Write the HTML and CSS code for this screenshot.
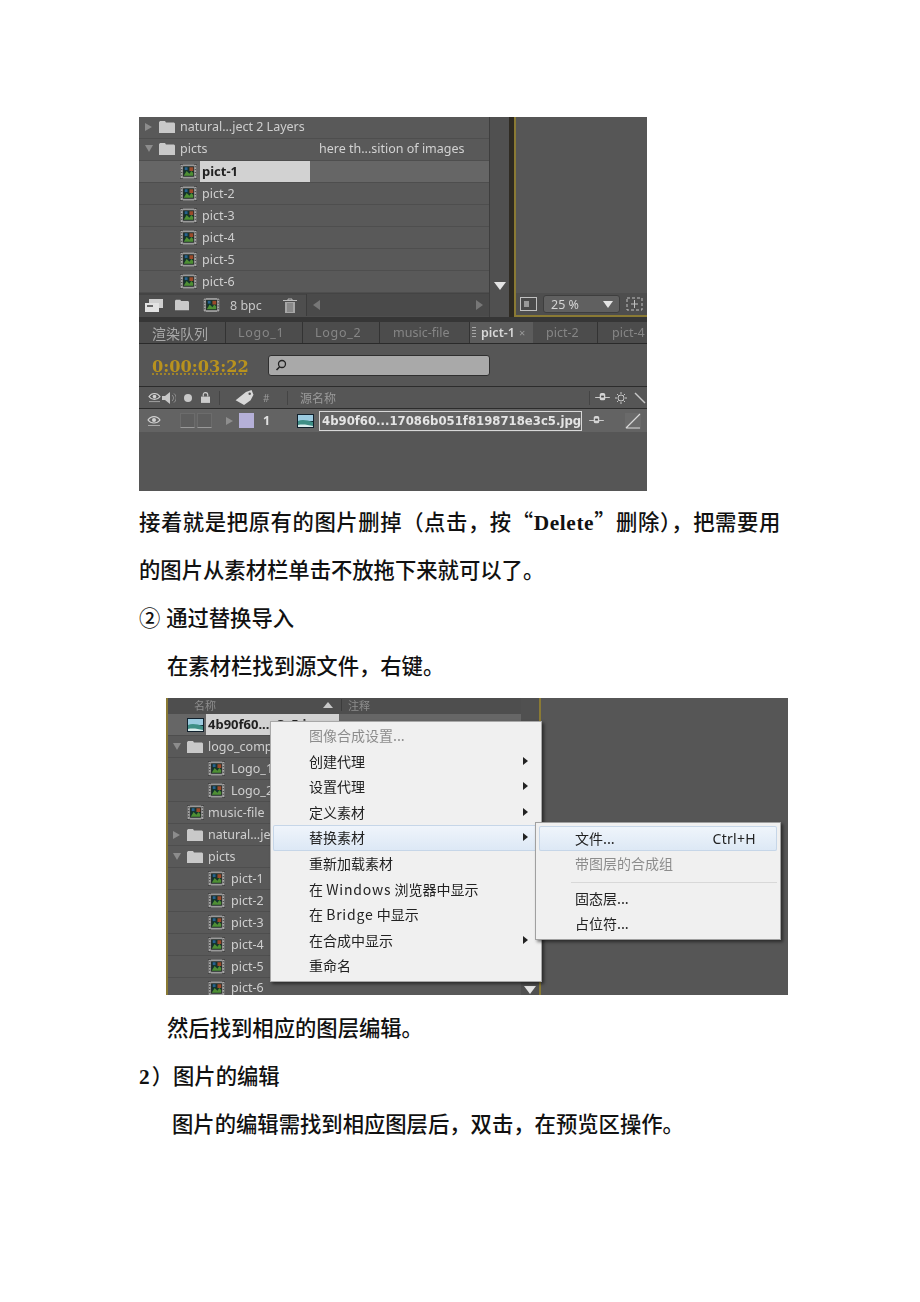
FILE: index.html
```html
<!DOCTYPE html>
<html lang="zh-CN">
<head>
<meta charset="utf-8">
<title>图片的编辑</title>
<link rel="stylesheet" href="styles.css">
</head>
<body>
<svg class="defs" width="0" height="0" aria-hidden="true">
  <symbol id="film" viewBox="0 0 18 15">
    <rect x="0" y="0" width="18" height="15" fill="#2e2e2e"/>
    <rect x="0.5" y="0.5" width="2.5" height="14" fill="#a8a8a8"/>
    <rect x="15" y="0.5" width="2.5" height="14" fill="#a8a8a8"/>
    <path d="M1 2.500h1.500M1 5.500h1.500M1 8.500h1.500M1 11.500h1.500M15.500 2.500h1.500M15.500 5.500h1.500M15.500 8.500h1.500M15.500 11.500h1.500" stroke="#444"/>
    <rect x="3" y="0" width="12" height="2" fill="#9a9a9a"/>
    <rect x="3" y="13" width="12" height="2" fill="#9a9a9a"/>
    <rect x="4" y="2.500" width="10" height="10" fill="#14332c"/>
    <path d="M4 12l3-5 3 3 2-3 2 2v3z" fill="#4f8f34"/>
    <rect x="10" y="3" width="4" height="4" fill="#9c4a2a"/>
    <rect x="5" y="3" width="3" height="3" fill="#27608f"/>
  </symbol>
  <symbol id="folder" viewBox="0 0 16 12">
    <path d="M0 2V1.200L1 0h5l1 1.500h8L16 2.500V12H0z" fill="#c9c9c9"/>
  </symbol>
  <symbol id="thumb" viewBox="0 0 17 14">
    <rect width="17" height="14" fill="#10202c"/>
    <rect x="1" y="1" width="15" height="6" fill="#9ccbe0"/>
    <path d="M1 7c4-2 9-1 15 1v5H1z" fill="#3f8f86"/>
    <path d="M1 11c5-1 10 0 15 1v1H1z" fill="#d9ecec"/>
  </symbol>
  <symbol id="eye" viewBox="0 0 14 12">
    <path d="M1 5c3-4.500 9-4.500 12 0-3 4-9 4-12 0z" fill="none" stroke="#d0d0d0" stroke-width="1.200"/>
    <circle cx="7" cy="5" r="2" fill="#d0d0d0"/>
    <rect x="1" y="10" width="12" height="1" fill="#a8a8a8"/>
  </symbol>
  <symbol id="solo" viewBox="0 0 16 12">
    <rect x="5" y="1" width="6" height="8" rx="2" fill="#d4d4d4"/>
    <path d="M0 6h16" stroke="#d4d4d4"/>
    <rect x="6.500" y="4" width="3" height="2" fill="#444"/>
  </symbol>
</svg>

<main class="page">
  <section class="shot shot-one">
    <div class="upper">
      <div class="project">
        <div class="row row-top"><span class="tw"><i class="tri-r"></i></span><svg class="ico-folder"><use href="#folder"/></svg><span class="name">natural...ject 2 Layers</span></div>
        <div class="row row-top"><span class="tw"><i class="tri-d"></i></span><svg class="ico-folder"><use href="#folder"/></svg><span class="name name-col">picts</span><span class="note">here th...sition of images</span></div>
        <div class="row row-sel"><span class="ind"></span><svg class="ico-film"><use href="#film"/></svg><span class="name-sel">pict-1</span></div>
        <div class="row"><span class="ind"></span><svg class="ico-film"><use href="#film"/></svg><span class="name">pict-2</span></div>
        <div class="row"><span class="ind"></span><svg class="ico-film"><use href="#film"/></svg><span class="name">pict-3</span></div>
        <div class="row"><span class="ind"></span><svg class="ico-film"><use href="#film"/></svg><span class="name">pict-4</span></div>
        <div class="row"><span class="ind"></span><svg class="ico-film"><use href="#film"/></svg><span class="name">pict-5</span></div>
        <div class="row"><span class="ind"></span><svg class="ico-film"><use href="#film"/></svg><span class="name">pict-6</span></div>
        <div class="toolbar">
          <svg class="tb-comp" viewBox="0 0 18 13"><rect x="4" y="0" width="14" height="9" fill="#cfcfcf"/><rect x="0" y="4" width="14" height="9" fill="#e2e2e2"/><rect x="2" y="6" width="6" height="2" fill="#666"/></svg>
          <svg class="tb-folder"><use href="#folder"/></svg>
          <svg class="tb-film"><use href="#film"/></svg>
          <span class="bpc">8 bpc</span>
          <svg class="tb-trash" viewBox="0 0 14 15"><path d="M0 2.500h14M5 2.500V1h4v1.500" stroke="#bbb" fill="none"/><path d="M2 4h10v11H2z" fill="#a6a6a6"/><path d="M5 5v9M7 5v9M9 5v9" stroke="#6a6a6a"/></svg>
          <div class="hscroll"><i class="tri-l"></i><i class="tri-r tri-r-dim"></i></div>
        </div>
      </div>
      <div class="vscroll"><i class="tri-down-big"></i></div>
      <div class="viewer">
        <div class="viewer-main"></div>
        <div class="viewer-bar">
          <svg class="vb-ico" viewBox="0 0 17 14"><rect x="0.500" y="0.500" width="16" height="13" fill="#4a4a4a" stroke="#c0c0c0"/><rect x="4" y="4" width="5" height="6" fill="#999"/></svg>
          <div class="zoom-box"><span>25 %</span><i class="tri-down-big tri-small"></i></div>
          <svg class="vb-ico" viewBox="0 0 17 14"><path d="M1 1h15v12H1z" fill="none" stroke="#c0c0c0" stroke-dasharray="3 2"/><path d="M8.500 3v8M5 7h7" stroke="#c0c0c0"/></svg>
        </div>
      </div>
    </div>
    <div class="tabs">
      <span class="tab tab-cn">渲染队列</span>
      <span class="tab tab-a">Logo_1</span>
      <span class="tab tab-a">Logo_2</span>
      <span class="tab tab-m">music-file</span>
      <span class="tab tab-on"><i class="grip"></i>pict-1 <em>×</em></span>
      <span class="tab tab-b">pict-2</span>
      <span class="tab tab-c">pict-4</span>
    </div>
    <div class="timebar">
      <span class="timecode">0:00:03:22</span>
      <div class="search">
        <svg class="lens" viewBox="0 0 12 12"><circle cx="7" cy="5" r="3.500" fill="none" stroke="#222" stroke-width="1.300"/><path d="M4.500 8L1.500 11" stroke="#222" stroke-width="1.600"/></svg>
      </div>
    </div>
    <div class="layer-head">
      <svg class="h-eye"><use href="#eye"/></svg>
      <svg class="h-spk" viewBox="0 0 14 12"><path d="M0 4h3l5-4v12L3 8H0z" fill="#c8c8c8"/><path d="M10 3c2 2 2 4 0 6M12 1.500c3 3 3 6 0 9" stroke="#999" fill="none"/></svg>
      <i class="h-dot"></i>
      <svg class="h-lock" viewBox="0 0 10 12"><path d="M2.500 5V3a2.500 2.500 0 0 1 5 0v2" fill="none" stroke="#ccc" stroke-width="1.300"/><rect y="5" width="10" height="7" fill="#ccc"/></svg>
      <i class="h-div h-div-1"></i>
      <svg class="h-tag" viewBox="0 0 20 16"><path d="M0 11L11 2l6-2 2 5-3 6-7 5z" fill="#d8d8d8"/><circle cx="15" cy="4" r="1.300" fill="#555"/></svg>
      <span class="h-num">#</span>
      <i class="h-div h-div-2"></i>
      <span class="h-src">源名称</span>
      <span class="h-right">
        <i class="h-div"></i>
        <svg class="h-solo"><use href="#solo"/></svg>
        <svg class="h-sun" viewBox="0 0 12 12"><circle cx="6" cy="6" r="3" fill="none" stroke="#c8c8c8"/><path d="M6 0v2M6 10v2M0 6h2M10 6h2M2 2l1.500 1.500M8.500 8.500L10 10M10 2L8.500 3.500M3.500 8.500L2 10" stroke="#c8c8c8"/></svg>
        <svg class="h-slash" viewBox="0 0 12 12"><path d="M1 1l10 10" stroke="#c8c8c8" stroke-width="1.400"/></svg>
      </span>
    </div>
    <div class="layer-row">
      <svg class="l-eye"><use href="#eye"/></svg>
      <i class="l-box l-box-1"></i><i class="l-box"></i>
      <i class="tri-r tri-r-layer"></i>
      <i class="l-label"></i>
      <span class="l-num">1</span>
      <svg class="l-thumb"><use href="#thumb"/></svg>
      <span class="l-name">4b90f60...17086b051f8198718e3c5.jpg</span>
      <svg class="l-solo"><use href="#solo"/></svg>
      <svg class="l-switch" viewBox="0 0 16 16"><rect width="16" height="16" fill="#6a6a6a"/><path d="M1 15L15 1M1 15h14" stroke="#d8d8d8" stroke-width="1.200" fill="none"/></svg>
    </div>
  </section>

  <p class="para first">接着就是把原有的图片删掉（点击，按“<b>Delete</b>”删除），把需要用</p>
  <p class="para">的图片从素材栏单击不放拖下来就可以了。</p>
  <p class="para">② 通过替换导入</p>
  <p class="para indent">在素材栏找到源文件，右键。</p>

  <section class="shot shot-two">
    <div class="p2-left">
      <div class="p2-head"><span class="p2-h1">名称</span><i class="tri-up"></i><span class="p2-h2">注释</span></div>
      <div class="row row-sel p2-row"><span class="tw"></span><svg class="ico-thumb"><use href="#thumb"/></svg><span class="name-sel p2-sel">4b90f60...e3c5.jpg</span></div>
      <div class="row p2-row"><span class="tw"><i class="tri-d"></i></span><svg class="ico-folder"><use href="#folder"/></svg><span class="name">logo_comps</span></div>
      <div class="row p2-row"><span class="ind"></span><svg class="ico-film"><use href="#film"/></svg><span class="name">Logo_1</span></div>
      <div class="row p2-row"><span class="ind"></span><svg class="ico-film"><use href="#film"/></svg><span class="name">Logo_2</span></div>
      <div class="row p2-row"><span class="tw"></span><svg class="ico-film ico-film-top"><use href="#film"/></svg><span class="name">music-file</span></div>
      <div class="row p2-row"><span class="tw"><i class="tri-r"></i></span><svg class="ico-folder"><use href="#folder"/></svg><span class="name">natural...ject</span></div>
      <div class="row p2-row"><span class="tw"><i class="tri-d"></i></span><svg class="ico-folder"><use href="#folder"/></svg><span class="name">picts</span></div>
      <div class="row p2-row"><span class="ind"></span><svg class="ico-film"><use href="#film"/></svg><span class="name">pict-1</span></div>
      <div class="row p2-row"><span class="ind"></span><svg class="ico-film"><use href="#film"/></svg><span class="name">pict-2</span></div>
      <div class="row p2-row"><span class="ind"></span><svg class="ico-film"><use href="#film"/></svg><span class="name">pict-3</span></div>
      <div class="row p2-row"><span class="ind"></span><svg class="ico-film"><use href="#film"/></svg><span class="name">pict-4</span></div>
      <div class="row p2-row"><span class="ind"></span><svg class="ico-film"><use href="#film"/></svg><span class="name">pict-5</span></div>
      <div class="row p2-row p2-last"><span class="ind"></span><svg class="ico-film"><use href="#film"/></svg><span class="name">pict-6</span></div>
    </div>
    <div class="p2-scroll"><i class="tri-down-big p2-arrow"></i></div>
    <div class="p2-right"></div>

    <div class="menu">
      <div class="mi mi-off">图像合成设置...</div>
      <div class="mi">创建代理<i class="arrow"></i></div>
      <div class="mi">设置代理<i class="arrow"></i></div>
      <div class="mi">定义素材<i class="arrow"></i></div>
      <div class="mi mi-hover">替换素材<i class="arrow"></i></div>
      <div class="mi">重新加载素材</div>
      <div class="mi">在 <span class="latin">Windows</span> 浏览器中显示</div>
      <div class="mi">在 <span class="latin">Bridge</span> 中显示</div>
      <div class="mi">在合成中显示<i class="arrow"></i></div>
      <div class="mi">重命名</div>
      <div class="submenu">
        <div class="si si-hover"><span>文件...</span><span>Ctrl+H</span></div>
        <div class="si si-off">带图层的合成组</div>
        <div class="sep"></div>
        <div class="si">固态层...</div>
        <div class="si">占位符...</div>
      </div>
    </div>
  </section>

  <p class="para after-two indent">然后找到相应的图层编辑。</p>
  <p class="para head">2<span class="cn-normal">）图片的编辑</span></p>
  <p class="para indent-2">图片的编辑需找到相应图层后，双击，在预览区操作。</p>
</main>
</body>
</html>
```

FILE: styles.css
```css
* { box-sizing: border-box; }
html, body { margin: 0; padding: 0; background: #fff; }
body { width: 920px; height: 1302px; overflow: hidden; font-family: "Noto Sans CJK SC", "Liberation Serif", serif; color: #111; }
.defs { position: absolute; }
i, em { display: block; font-style: normal; }
svg { display: block; flex: none; }

.page { padding: 117px 0 0 139px; }

/* document text */
.para { margin: 0; height: 48px; line-height: 48px; font-size: 21.33px; font-weight: 500; white-space: nowrap; word-spacing: 1px; }
.para b { font-family: "Liberation Serif", serif; font-weight: 700; }
.first { margin-top: 6px; letter-spacing: .6px; }
.indent { padding-left: 28px; }
.indent-2 { padding-left: 33px; }
.after-two { margin-top: 8px; }
.head { font-family: "Liberation Serif", serif; font-weight: 700; }
.cn-normal { padding-left: 2px; font-family: "Noto Sans CJK SC", sans-serif; font-weight: 500; }

/* shared panel parts */
.shot { background: #565656; font-family: "Noto Sans", "Open Sans", sans-serif; filter: blur(0.35px); }
.shot-one { width: 508px; height: 374px; display: flex; flex-direction: column; overflow: hidden; }
.upper { height: 200px; display: flex; flex: none; }
.project { width: 350px; flex: none; display: flex; flex-direction: column; background: #585858; }

.row { height: 22px; flex: none; display: flex; align-items: center; font-size: 12.500px; color: #cfcfcf; border-bottom: 1px solid #4e4e4e; background: #595959; }
.row-top { padding-bottom: 2px; }
.row-sel { background: #666; }
.tw { width: 20px; flex: none; display: flex; padding-left: 6px; }
.ind { width: 41px; flex: none; }
.ico-folder { width: 16px; height: 12px; margin-right: 5px; }
.ico-film { width: 17px; height: 15px; margin-right: 5px; }
.ico-thumb { width: 17px; height: 14px; margin-right: 4px; }
.name { white-space: nowrap; }
.name-col { width: 139px; }
.note { white-space: nowrap; color: #d2d2d2; }
.name-sel { width: 110px; height: 21px; margin-left: -2px; padding-left: 2px; line-height: 21px; background: #d2d2d2; color: #222; font-weight: 700; font-size: 13px; white-space: nowrap; overflow: hidden; }

.tri-r { width: 0; height: 0; border-left: 7px solid #8c8c8c; border-top: 4px solid transparent; border-bottom: 4px solid transparent; }
.tri-d { width: 0; height: 0; border-top: 7px solid #8c8c8c; border-left: 4px solid transparent; border-right: 4px solid transparent; }
.tri-l { width: 0; height: 0; border-right: 7px solid #777; border-top: 5px solid transparent; border-bottom: 5px solid transparent; }
.tri-r-dim { border-left-color: #777; border-top-width: 5px; border-bottom-width: 5px; }
.tri-down-big { width: 0; height: 0; border-top: 8px solid #e4e4e4; border-left: 6px solid transparent; border-right: 6px solid transparent; }
.tri-small { border-top-width: 7px; border-left-width: 5px; border-right-width: 5px; }
.tri-up { width: 0; height: 0; border-bottom: 6px solid #c8c8c8; border-left: 5px solid transparent; border-right: 5px solid transparent; margin-left: 105px; }

.toolbar { height: 24px; flex: none; display: flex; align-items: center; padding-bottom: 2px; background: #4e4e4e; border-top: 2px solid #444; padding-left: 6px; font-size: 12.500px; color: #c8c8c8; }
.tb-comp { width: 18px; height: 13px; }
.tb-folder { width: 14px; height: 12px; margin-left: 12px; }
.tb-film { width: 17px; height: 14px; margin-left: 14px; }
.bpc { margin-left: 10px; width: 53px; white-space: nowrap; }
.tb-trash { width: 14px; height: 15px; }
.hscroll { margin-left: 9px; width: 183px; height: 22px; flex: none; display: flex; align-items: center; justify-content: space-between; padding: 0 6px 0 6px; background: #4a4a4a; border-left: 1px solid #3c3c3c; }

.vscroll { width: 20px; flex: none; display: flex; flex-direction: column; justify-content: flex-end; align-items: center; padding-bottom: 27px; background: #505050; border-left: 1px solid #3e3e3e; }
.viewer { flex: 1; display: flex; flex-direction: column; background: #565656; border-left: 2px solid #8a7a34; box-shadow: -5px 0 0 #2e2a22; margin-left: 5px; border-bottom: 2px solid #8a7a34; }
.viewer-main { flex: 1; }
.viewer-bar { height: 22px; flex: none; display: flex; align-items: center; gap: 6px; padding-left: 4px; background: #4e4e4e; }
.vb-ico { width: 17px; height: 14px; }
.zoom-box { width: 77px; height: 18px; display: flex; align-items: center; justify-content: space-between; padding: 0 6px 0 7px; border-radius: 3px; background: #606060; font-size: 12.500px; color: #d4d4d4; border: 1px solid #3e3e3e; }

.tabs { height: 27px; flex: none; display: flex; align-items: stretch; padding-top: 5px; background: #363636; border-bottom: 1px solid #2a2a2a; font-size: 12.500px; color: #868686; white-space: nowrap; }
.tab { display: flex; align-items: center; background: #4c4c4c; border-right: 1px solid #333; }
.tab-cn { width: 87px; padding-left: 13px; font-family: "Noto Sans CJK SC", sans-serif; font-size: 14px; color: #a8a8a8; }
.tab-a { width: 77px; padding-left: 12px; letter-spacing: .7px; }
.tab-m { width: 90px; padding-left: 13px; }
.tab-on { width: 63px; padding-left: 2px; gap: 4px; background: #5c5c5c; color: #d8d8d8; font-weight: 600; border-right: 0; }
.grip { width: 4px; height: 11px; margin-right: 1px; background: repeating-linear-gradient(#a8a8a8 0 1px, transparent 1px 3px); }
.tab-on em { font-weight: 400; color: #999; font-size: 11px; }
.tab-b { width: 65px; padding-left: 13px; }
.tab-c { flex: 1; padding-left: 14px; border-right: 0; }

.timebar { height: 43px; flex: none; display: flex; align-items: center; padding-left: 13px; background: #565656; border-bottom: 1px solid #2c2c2c; }
.timecode { width: 116px; margin-top: 4px; font-family: "DejaVu Serif", "Liberation Serif", serif; font-weight: 700; font-size: 16.200px; color: #b8921e; line-height: 18px; white-space: nowrap; text-decoration: underline dotted #b8921e; text-underline-offset: 2px; }
.search { width: 222px; height: 21px; padding: 3px 0 0 6px; background: #a9a9a9; border: 1px solid #2f2f2f; border-radius: 3px; }
.lens { width: 12px; height: 12px; }

.layer-head { height: 22px; flex: none; display: flex; align-items: center; padding-left: 9px; background: #565656; border-bottom: 1px solid #2c2c2c; font-size: 10px; color: #9a9a9a; }
.h-eye { width: 13px; height: 11px; }
.h-spk { width: 14px; height: 12px; margin-left: 1px; }
.h-dot { width: 8px; height: 8px; margin-left: 8px; border-radius: 50%; background: #c8c8c8; }
.h-lock { width: 9px; height: 11px; margin-left: 9px; }
.h-div { width: 1px; height: 14px; background: #444; }
.h-div-1 { margin-left: 9px; }
.h-tag { width: 20px; height: 15px; margin-left: 15px; }
.h-num { margin-left: 8px; width: 24px; }
.h-src { margin-left: 6px; padding-left: 6px; font-family: "Noto Sans CJK SC", sans-serif; font-size: 12px; width: 295px; white-space: nowrap; }
.h-right { display: flex; align-items: center; gap: 5px; }
.h-solo { width: 15px; height: 11px; }
.h-sun { width: 12px; height: 12px; }
.h-slash { width: 12px; height: 12px; margin-left: 2px; }

.layer-row { height: 23px; flex: none; display: flex; align-items: center; padding-left: 8px; background: #636363; }
.l-eye { width: 14px; height: 12px; }
.l-box { width: 15px; height: 15px; margin-left: 2px; background: #5e5e5e; border: 1px solid #6c6c6c; border-bottom: 1px solid #999; }
.l-box-1 { margin-left: 19px; }
.tri-r-layer { margin-left: 14px; border-left-color: #8e8e8e; }
.l-label { width: 15px; height: 15px; margin-left: 6px; background: #b5b0d8; }
.l-num { width: 34px; margin-left: 9px; font-weight: 700; color: #e0e0e0; font-size: 12.500px; }
.l-thumb { width: 17px; height: 14px; }
.l-name { width: 263px; height: 20px; margin-left: 5px; padding-left: 2px; line-height: 18px; border: 1px solid #d8d8d8; color: #e4e4e4; font-family: "DejaVu Sans", sans-serif; font-weight: 700; font-size: 11.700px; white-space: nowrap; overflow: hidden; }
.l-solo { width: 15px; height: 11px; margin-left: 7px; }
.l-switch { width: 16px; height: 16px; margin-left: 21px; }

/* second screenshot */
.shot-two { position: relative; width: 622px; height: 297px; display: flex; overflow: hidden; margin: 9px 0 0 27px; }
.p2-left { width: 355px; flex: none; border-left: 2px solid #8a7a34; display: flex; flex-direction: column; background: #595959; overflow: hidden; }
.p2-head { height: 16px; flex: none; display: flex; align-items: center; padding-bottom: 3px; line-height: 12px; background: #4e4e4e; font-family: "Noto Sans CJK SC", sans-serif; font-size: 11px; color: #8e8e8e; }
.p2-h1 { margin-left: 26px; width: 24px; }
.p2-h2 { margin-left: 8px; padding-left: 6px; border-left: 1px solid #3c3c3c; }
.p2-row .tw { width: 19px; padding-left: 5px; }
.p2-row .ind { width: 40px; }
.p2-row .ico-film { margin-right: 6px; }
.p2-row .ico-film-top { margin-right: 4px; }
.p2-row .ico-folder { margin-right: 5px; }
.p2-last { height: 17px; align-items: flex-start; padding-top: 3px; border-bottom: 0; }
.p2-last .name { line-height: 14px; }
.p2-sel { width: 133px; background: #d2d2d2; }
.p2-scroll { width: 18px; flex: none; display: flex; flex-direction: column; justify-content: flex-end; align-items: center; padding-bottom: 1px; background: #505050; }
.p2-right { flex: 1; background: #565656; border-left: 2px solid #8a7a34; }

.menu { position: absolute; left: 104px; top: 23px; width: 272px; height: 261px; padding: 1px 2px 2px; background: #f0f0f0; border: 1px solid #a8a8a8; box-shadow: 2px 2px 3px rgba(0,0,0,.5); font-family: "Noto Sans CJK SC", sans-serif; font-size: 14px; color: #222; }
.mi { position: relative; height: 25.600px; padding-left: 36px; line-height: 25px; white-space: nowrap; }
.latin { letter-spacing: .8px; }
.mi-off { color: #8c8c8c; }
.mi-hover { background: linear-gradient(#f0f5fb, #dce8f5); box-shadow: inset 0 0 0 1px #c6d6e8; border-radius: 2px; }
.arrow { position: absolute; right: 11px; top: 8px; width: 0; height: 0; border-left: 5px solid #222; border-top: 4px solid transparent; border-bottom: 4px solid transparent; }

.submenu { position: absolute; left: 264px; top: 100px; width: 246px; height: 118px; padding: 3px; background: #f0f0f0; border: 1px solid #a0a0a0; box-shadow: 2px 2px 3px rgba(0,0,0,.5); }
.si { height: 25.300px; line-height: 25px; padding-left: 36px; white-space: nowrap; }
.si-hover { display: flex; justify-content: space-between; padding-right: 21px; background: linear-gradient(#f0f5fb, #dce8f5); box-shadow: inset 0 0 0 1px #c6d6e8; border-radius: 2px; }
.si-hover span:last-child { font-family: "Noto Sans", sans-serif; letter-spacing: .3px; }
.si-off { color: #8c8c8c; }
.sep { height: 1px; margin: 5px 0 3px 32px; background: #d8d8d8; }
```
